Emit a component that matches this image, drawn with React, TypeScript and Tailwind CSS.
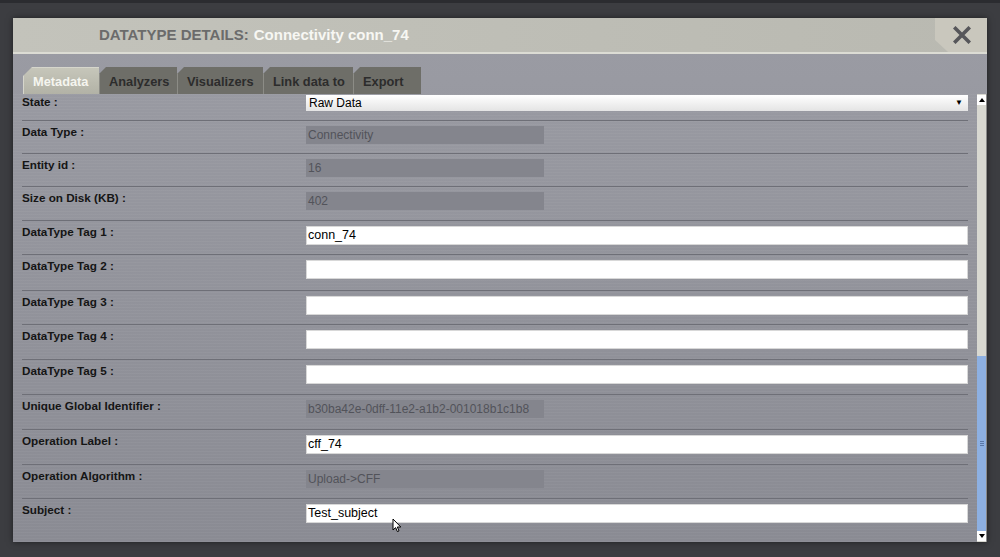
import React from 'react'

type Row = {
  label: string
  kind: 'select' | 'disabled' | 'text'
  value: string
  h: string
}

const rows: Row[] = [
  { label: 'State :', kind: 'select', value: 'Raw Data', h: 'h-[32px]' },
  { label: 'Data Type :', kind: 'disabled', value: 'Connectivity', h: 'h-[33px]' },
  { label: 'Entity id :', kind: 'disabled', value: '16', h: 'h-[33px]' },
  { label: 'Size on Disk (KB) :', kind: 'disabled', value: '402', h: 'h-[34px]' },
  { label: 'DataType Tag 1 :', kind: 'text', value: 'conn_74', h: 'h-[34px]' },
  { label: 'DataType Tag 2 :', kind: 'text', value: '', h: 'h-[36px]' },
  { label: 'DataType Tag 3 :', kind: 'text', value: '', h: 'h-[34px]' },
  { label: 'DataType Tag 4 :', kind: 'text', value: '', h: 'h-[35px]' },
  { label: 'DataType Tag 5 :', kind: 'text', value: '', h: 'h-[35px]' },
  { label: 'Unique Global Identifier :', kind: 'disabled', value: 'b30ba42e-0dff-11e2-a1b2-001018b1c1b8', h: 'h-[35px]' },
  { label: 'Operation Label :', kind: 'text', value: 'cff_74', h: 'h-[35px]' },
  { label: 'Operation Algorithm :', kind: 'disabled', value: 'Upload->CFF', h: 'h-[34px]' },
  { label: 'Subject :', kind: 'text', value: 'Test_subject', h: 'h-[50px]' },
]

const tabs = [
  { name: 'Metadata', w: 'w-[76px]' },
  { name: 'Analyzers', w: 'w-[78px]' },
  { name: 'Visualizers', w: 'w-[86px]' },
  { name: 'Link data to', w: 'w-[90px]' },
  { name: 'Export', w: 'w-[68px]' },
]

function Field({ row }: { row: Row }) {
  if (row.kind === 'select') {
    return (
      <div className="flex h-[16px] w-[662px] items-center justify-between bg-gradient-to-b from-white to-[#e4e4e4] pl-[3px] pr-[5px] text-[12px] text-black">
        <span>{row.value}</span>
        <span className="text-[8px] leading-none">▼</span>
      </div>
    )
  }
  if (row.kind === 'disabled') {
    return (
      <div className="mt-[5px] flex h-[18px] w-[238px] items-center overflow-hidden whitespace-nowrap bg-[#84858d] pl-[2px] text-[12px] text-[#52535a]">
        {row.value}
      </div>
    )
  }
  return (
    <div className="mt-[5px] flex h-[19px] w-[662px] items-center border border-[#d8d8d8] bg-white pl-[1px] text-[12.5px] text-black">
      {row.value}
    </div>
  )
}

export default function App() {
  return (
    <div className="relative h-[557px] w-[1000px] overflow-hidden border-t-[3px] border-[#2b2c30] bg-[#3c3d41] pl-[13px] pt-[15px] font-['Liberation_Sans',Arial,sans-serif]">
      <div className="flex h-[524px] w-[974px] flex-col bg-gradient-to-b from-[#9b9ca4] to-[#8a8b93] shadow-[0_0_6px_rgba(0,0,0,0.5)]">
        {/* header */}
        <div className="flex h-[36px] items-stretch border-b-2 border-[#dcdcd4] bg-gradient-to-r from-[#c3c3bb] to-[#b9b9b1]">
          <div className="flex flex-1 items-center pl-[86px] pt-[1px] text-[15px] font-bold">
            <span className="text-[#6b6b6b]">DATATYPE DETAILS:</span>
            <span className="ml-[5px] text-[#f7f7f3]">Connectivity conn_74</span>
          </div>
          <div className="flex w-[52px] items-center justify-center bg-[#c9c7bd] pl-[2px] [clip-path:polygon(0_0,100%_0,100%_100%,13px_100%,0_22px)]">
            <svg width="18" height="18" viewBox="0 0 18 18">
              <path d="M2.5 2.5 L15.5 15.5 M15.5 2.5 L2.5 15.5" stroke="#56565a" strokeWidth="3.6" strokeLinecap="square" />
            </svg>
          </div>
        </div>

        {/* tabs */}
        <div className="flex h-[40px] items-end pl-[10px]">
          {tabs.map((t, i) => (
            <div
              key={t.name}
              className={
                i === 0
                  ? `flex h-[27px] ${t.w} items-center border-l border-t border-[#d6d6cc] bg-gradient-to-b from-[#c6c6ba] to-[#b2b2a6] pl-[9px] pt-[2px] text-[12.8px] font-bold text-[#f5f5ef] [clip-path:polygon(9px_0,100%_0,100%_100%,0_100%,0_9px)]`
                  : `flex h-[27px] ${t.w} items-center border-l border-[#8c8c86] bg-[#6e6e68] pl-[9px] pt-[2px] text-[12.8px] font-bold text-[#2c2c2c] [clip-path:polygon(7px_0,100%_0,100%_100%,0_100%,0_7px)]`
              }
            >
              {t.name}
            </div>
          ))}
        </div>

        {/* content */}
        <div className="flex min-h-0 flex-1">
          <div className="min-w-0 flex-1 overflow-hidden bg-[repeating-linear-gradient(180deg,rgba(255,255,255,0.035)_0px,rgba(255,255,255,0.035)_1px,transparent_1px,transparent_3px)] px-[9px]">
            <div className="-mt-[6px]">
              {rows.map((r, i) => (
                <div
                  key={r.label}
                  className={`flex ${r.h} ${i === 0 ? 'pt-[7px]' : 'border-t border-[#6e6f77]'}`}
                >
                  <div className={`w-[284px] shrink-0 text-[11.7px] font-bold leading-[13px] text-[#151515] ${i === 0 ? 'pt-0' : 'pt-[4px]'}`}>
                    {r.label}
                  </div>
                  <div>
                    <Field row={r} />
                  </div>
                </div>
              ))}
            </div>
          </div>

          {/* scrollbar */}
          <div className="flex w-[10px] flex-col border-r border-[#8a8a8a] bg-[#d8d8d1] pt-[1px]">
            <div className="flex h-[10px] items-center justify-center bg-white">
              <span className="block h-0 w-0 border-x-[3px] border-b-[4px] border-x-transparent border-b-black" />
            </div>
            <div className="flex flex-1 flex-col justify-end">
              <div className="flex h-[175px] items-center justify-center bg-[#8db0e2]">
                <div className="flex flex-col gap-[1px]">
                  <span className="block h-px w-[4px] bg-[#5a78a8]" />
                  <span className="block h-px w-[4px] bg-[#5a78a8]" />
                  <span className="block h-px w-[4px] bg-[#5a78a8]" />
                </div>
              </div>
            </div>
            <div className="mb-[1px] flex h-[10px] items-center justify-center bg-white">
              <span className="block h-0 w-0 border-x-[3px] border-t-[4px] border-x-transparent border-t-black" />
            </div>
          </div>
        </div>
      </div>

      {/* mouse pointer */}
      <svg className="absolute left-[392px] top-[515px]" width="10" height="15" viewBox="0 0 10 15">
        <path d="M1 1 L1 12 L3.6 9.6 L5.4 13.6 L7 12.9 L5.3 9 L8.8 9 Z" fill="#fff" stroke="#000" strokeWidth="1" strokeLinejoin="round" />
      </svg>
    </div>
  )
}
